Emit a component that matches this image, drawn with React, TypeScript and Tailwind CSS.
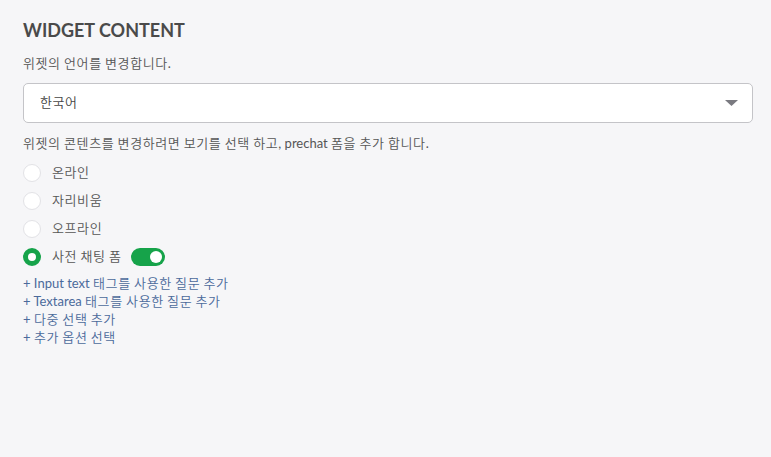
import React from "react";

const font = { fontFamily: 'Lato, "Noto Sans CJK KR", sans-serif' };

function K({ children }: { children: string }) {
  const parts = children.split(/([\uAC00-\uD7A3]+)/);
  return (
    <>
      {parts.map((p, i) =>
        /[\uAC00-\uD7A3]/.test(p) ? (
          <span key={i} className="tracking-[0.6px] font-[350]">
            {p}
          </span>
        ) : (
          <span key={i}>{p}</span>
        )
      )}
    </>
  );
}

function Radio({ label, checked }: { label: string; checked?: boolean }) {
  return (
    <div className="flex items-center h-[28px]">
      {checked ? (
        <span className="w-[18px] h-[18px] rounded-full border-[5px] border-[#16a34a] bg-white box-border" />
      ) : (
        <span className="w-[18px] h-[18px] rounded-full border border-[#e2e2e6] bg-white box-border" />
      )}
      <span className="ml-[11px] text-[13px] text-[#555]">
        <K>{label}</K>
      </span>
      {checked && (
        <span className="ml-[10px] w-[34px] h-[18px] rounded-full bg-[#16a34a] flex items-center justify-end pr-[3px]">
          <span className="w-[12px] h-[12px] rounded-full bg-white" />
        </span>
      )}
    </div>
  );
}

export default function App() {
  return (
    <div className="w-[771px] h-[457px] bg-[#f6f6f8] px-[23px] pt-[19px]" style={font}>
      <h1 className="text-[18px] font-bold text-[#4a4a4a] leading-[22px]">WIDGET CONTENT</h1>
      <p className="mt-[14px] text-[13px] text-[#555] leading-[16px]">
        <K>위젯의 언어를 변경합니다.</K>
      </p>
      <div className="mt-[12px] h-[40px] w-[730px] bg-white border border-[#c4c4c8] rounded-[5px] flex items-center justify-between pl-[16px] pr-[14px]">
        <span className="text-[13px] text-[#444]">
          <K>한국어</K>
        </span>
        <svg width="13" height="6" viewBox="0 0 13 6">
          <path d="M0 0 L13 0 L6.5 6 Z" fill="#7a7a80" />
        </svg>
      </div>
      <p className="mt-[12px] text-[13px] text-[#555] leading-[16px]">
        <K>위젯의 콘텐츠를 변경하려면 보기를 선택 하고, prechat 폼을 추가 합니다.</K>
      </p>
      <div className="mt-[8px] flex flex-col">
        <Radio label="온라인" />
        <Radio label="자리비움" />
        <Radio label="오프라인" />
        <Radio label="사전 채팅 폼" checked />
      </div>
      <div className="mt-[3px] flex flex-col text-[13px] leading-[18px] text-[#4b6a9b]">
        <span><K>+ Input text 태그를 사용한 질문 추가</K></span>
        <span><K>+ Textarea 태그를 사용한 질문 추가</K></span>
        <span><K>+ 다중 선택 추가</K></span>
        <span><K>+ 추가 옵션 선택</K></span>
      </div>
    </div>
  );
}
